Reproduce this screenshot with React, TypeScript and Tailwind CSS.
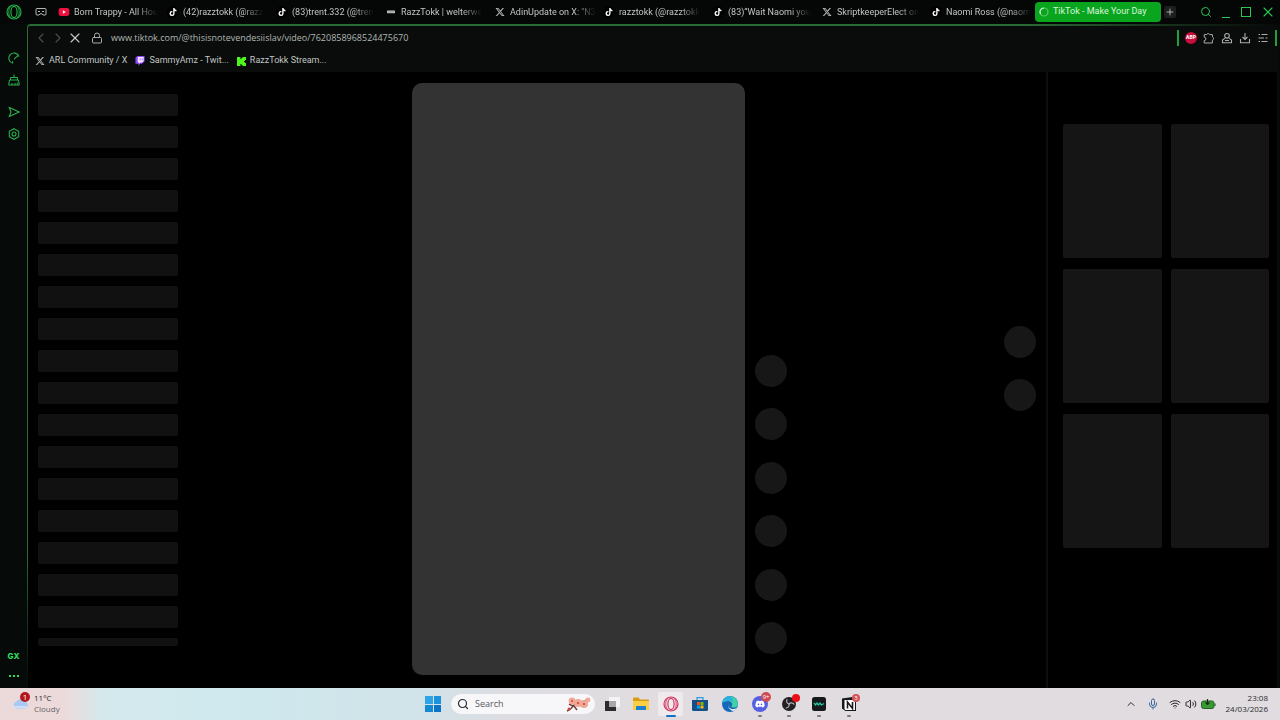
import React from "react";
import clsx from "clsx";
import { FaXTwitter, FaTiktok } from "react-icons/fa6";
import { FaDiscord } from "react-icons/fa";
import {
  ChevronLeft,
  ChevronRight,
  ChevronUp,
  Lock,
  Mic,
  Plus,
  Search,
  Volume2,
  Wifi,
  X,
} from "lucide-react";

type Favicon = "youtube" | "tiktok" | "x" | "dash";

const tabs: { icon: Favicon; title: string }[] = [
  { icon: "youtube", title: "Born Trappy - All Hou" },
  { icon: "tiktok", title: "(42)razztokk (@razz" },
  { icon: "tiktok", title: "(83)trent.332 (@tren" },
  { icon: "dash", title: "RazzTokk | welterwe" },
  { icon: "x", title: 'AdinUpdate on X: "N3' },
  { icon: "tiktok", title: "razztokk (@razztokk" },
  { icon: "tiktok", title: "(83)“Wait Naomi you" },
  { icon: "x", title: "SkriptkeeperElect on" },
  { icon: "tiktok", title: "Naomi Ross (@naom" },
];

const menuRows = Array.from({ length: 18 }, (_, i) => i);
const actions = Array.from({ length: 6 }, (_, i) => i);
const related = Array.from({ length: 6 }, (_, i) => i);

function TabIcon({ icon }: { icon: Favicon }) {
  if (icon === "youtube") {
    return (
      <svg viewBox="0 0 12 9" className="h-2 w-3 shrink-0">
        <rect width="12" height="9" rx="2.4" fill="#f0103f" />
        <path d="M4.7 2.5v4l3.4-2z" fill="#fff" />
      </svg>
    );
  }
  if (icon === "x") return <FaXTwitter className="mx-px size-2.5 shrink-0 text-[#b9bdbb]" />;
  if (icon === "dash") {
    return (
      <svg viewBox="0 0 10 10" className="mx-px size-2.5 shrink-0">
        <rect x="1" y="3.6" width="8" height="2.6" rx="0.6" fill="#c4c8c6" />
        <path d="M2 5h6" stroke="#6d716f" strokeWidth="0.6" />
      </svg>
    );
  }
  return (
    <span className="flex size-3 shrink-0 items-center justify-center rounded-full bg-black">
      <FaTiktok className="size-2 text-white" />
    </span>
  );
}

function OperaRing({ className }: { className?: string }) {
  return (
    <svg viewBox="0 0 16 16" fill="none" stroke="currentColor" strokeWidth="1.2" className={className}>
      <circle cx="8" cy="8" r="7" />
      <ellipse cx="8" cy="8" rx="3.1" ry="5.6" />
      <path d="M5.6 1.6C1.8 4 1.8 12 5.6 14.4M10.4 1.6c3.8 2.4 3.8 10.4 0 12.8" strokeWidth="0.9" />
    </svg>
  );
}

function TabStrip() {
  return (
    <header className="flex h-6 shrink-0 items-center bg-[#040705]">
      <button aria-label="Opera menu" className="flex w-7 shrink-0 justify-center text-[#23b04a]">
        <OperaRing className="size-4" />
      </button>
      <button aria-label="Workspaces" className="flex w-[26px] shrink-0 justify-center text-[#b4b8b6]">
        <svg viewBox="0 0 12 10" fill="none" stroke="currentColor" strokeWidth="1" className="h-2.5 w-3">
          <path d="M1 7V2.5a1 1 0 0 1 1-1h8a1 1 0 0 1 1 1V7a1 1 0 0 1-1 1H8L7 6.8H5L4 8H2a1 1 0 0 1-1-1z" />
          <path d="M3 4.5h2M7 4.5h2" />
        </svg>
      </button>
      <nav className="flex min-w-0 flex-1">
        {tabs.map((tab) => (
          <a key={tab.title} href="#" className="flex min-w-0 flex-1 items-center gap-1 pl-1">
            <TabIcon icon={tab.icon} />
            <span className="mask-r-from-75% text-[9px] leading-3 whitespace-nowrap text-[#c2c6c4]">{tab.title}</span>
          </a>
        ))}
      </nav>
      <a
        href="#"
        className="flex h-5 w-[126px] shrink-0 items-center gap-1 rounded-sm bg-[#0aa51f] pl-1 text-[9px] text-[#d9f5dc]"
      >
        <svg viewBox="0 0 10 10" fill="none" className="size-2.5">
          <circle cx="5" cy="5" r="4" stroke="#5cc968" strokeWidth="1.2" />
          <path d="M1.6 7A4 4 0 0 1 5 1" stroke="#c8f0cc" strokeWidth="1.2" />
        </svg>
        TikTok - Make Your Day
      </a>
      <button
        aria-label="New tab"
        className="mr-6 ml-[3px] flex size-3 shrink-0 items-center justify-center rounded-xs bg-[#1c1f1d] text-[#c5c9c7]"
      >
        <Plus className="size-2.5" />
      </button>
      <div className="flex shrink-0 items-center gap-2 pr-1 text-[#2cc653]">
        <button aria-label="Search tabs">
          <Search className="size-3" />
        </button>
        <button aria-label="Minimize" className="flex size-3 items-end justify-center">
          <span className="h-px w-2 bg-current" />
        </button>
        <button aria-label="Maximize" className="flex size-3 items-center justify-center">
          <span className="size-2.5 border border-current" />
        </button>
        <button aria-label="Close">
          <X className="size-4" strokeWidth={1.6} />
        </button>
      </div>
    </header>
  );
}

function SideBar() {
  return (
    <aside className="flex w-[27px] shrink-0 flex-col items-center bg-[#060a08] pt-7 pb-2 text-[#2cb04e]">
      <button aria-label="GX Control" className="mb-2.5">
        <svg viewBox="0 0 12 12" fill="none" stroke="currentColor" strokeWidth="1.1" className="size-3">
          <path d="M4.6 11.2A5.2 5.2 0 1 1 11 4.6M6 7.2l4.4-4M4.6 11.2V9.2" />
        </svg>
      </button>
      <button aria-label="GX Cleaner" className="mb-5">
        <svg viewBox="0 0 12 12" fill="none" stroke="currentColor" strokeWidth="1" className="size-3">
          <path d="M6 .5v3M2.5 6V3.5h7V6M1.5 6h9l.8 5H.7zM4 11V9M7 11V9M9.3 8.6v2" />
        </svg>
      </button>
      <button aria-label="Messengers" className="mb-2.5">
        <svg viewBox="0 0 12 12" fill="none" stroke="currentColor" strokeWidth="1.1" className="size-3">
          <path d="M1.3 1.5 11 6l-9.700 4.500L3 6z" />
        </svg>
      </button>
      <button aria-label="Settings">
        <svg viewBox="0 0 12 12" fill="none" stroke="currentColor" strokeWidth="1.1" className="size-3">
          <path d="M6 .7 10.700 3.300v5.400L6 11.300 1.300 8.700V3.300z" />
          <circle cx="6" cy="6" r="2" />
        </svg>
      </button>
      <button aria-label="GX Corner" className="mt-auto mb-2.5 font-[Inter,sans-serif] text-[8px] leading-3 font-extrabold text-[#32d95f]">
        GX
      </button>
      <button aria-label="Sidebar setup" className="flex h-2 items-center gap-0.5">
        <span className="size-0.5 bg-[#32d95f]" />
        <span className="size-0.5 bg-[#32d95f]" />
        <span className="size-0.5 bg-[#32d95f]" />
      </button>
    </aside>
  );
}

function AddressBar() {
  return (
    <div className="flex h-6 items-center pl-[5px] text-[#a9adab]">
      <div className="mr-2 flex items-center gap-px">
        <button aria-label="Back" className="text-[#4b4f4d]">
          <ChevronLeft className="size-4" strokeWidth={1.6} />
        </button>
        <button aria-label="Forward" className="text-[#4b4f4d]">
          <ChevronRight className="size-4" strokeWidth={1.6} />
        </button>
        <button aria-label="Stop" className="text-[#c5c9c7]">
          <X className="size-4" strokeWidth={1.6} />
        </button>
      </div>
      <Lock className="mr-2 size-3 shrink-0" />
      <input
        aria-label="Address"
        readOnly
        value="www.tiktok.com/@thisisnotevendesiislav/video/7620858968524475670"
        className="min-w-0 flex-1 bg-transparent font-['Open_Sans',sans-serif] text-[9px] text-[#b0b7b3] outline-none"
      />
      <div className="flex items-center gap-1.5">
        <span className="h-4 w-0.5 bg-[#1fa03c]" />
        <button
          aria-label="Adblock Plus"
          className="flex size-3 items-center justify-center rounded-full bg-[#c70d3a] text-[5px] font-extrabold text-white"
        >
          ABP
        </button>
        <button aria-label="Extensions">
          <svg viewBox="0 0 12 12" fill="none" stroke="currentColor" strokeWidth="1" className="size-3">
            <path d="M1.2 2.6h2.5a1.6 1.6 0 0 1 3 0h2.7v2.3a1.7 1.7 0 0 1 0 3.2V11H1.2V8.6a1.7 1.7 0 0 0 0-3.4z" />
          </svg>
        </button>
        <button aria-label="Profile">
          <svg viewBox="0 0 12 12" fill="none" stroke="currentColor" strokeWidth="1.1" className="size-3">
            <circle cx="6" cy="3.8" r="2.3" />
            <path d="M3.8 6.4 1.5 8v2.7h9V8L8.2 6.4M4 8.5h4" />
          </svg>
        </button>
        <button aria-label="Downloads">
          <svg viewBox="0 0 12 12" fill="none" stroke="currentColor" strokeWidth="1.1" className="size-3">
            <path d="M6 1v6.5M3.5 5 6 7.5 8.5 5M1.5 7v3.7h9V7" />
          </svg>
        </button>
        <button aria-label="Easy setup">
          <svg viewBox="0 0 12 12" fill="none" stroke="currentColor" strokeWidth="1.2" className="size-3">
            <path d="M1.5 2.5H3M4.5 2.5h6M1.5 6H7M8.5 6h2M1.5 9.5H3M4.5 9.5h6" />
          </svg>
        </button>
        <span className="h-4 w-0.5 bg-[#1fa03c]" />
      </div>
    </div>
  );
}

function Bookmarks() {
  return (
    <nav className="flex h-[22px] items-center gap-2 pl-[7px] text-[9px] text-[#c2c6c4]">
      <a href="#" className="flex items-center gap-1">
        <FaXTwitter className="size-2.5 text-[#b9bdbb]" />
        ARL Community / X
      </a>
      <a href="#" className="flex items-center gap-1">
        <svg viewBox="0 0 10 11" className="size-2.5">
          <path d="M2 0h8v6L7.2 8.6H5.2L3.2 10.6V8.6H0V2z" fill="#9147ff" />
          <path d="M2.6 1H9v4.6L7.4 7.2H5.4L4 8.6V7.2H2.6z" fill="#f1e9ff" />
          <path d="M5.2 2.6v2.2M7.4 2.6v2.2" stroke="#9147ff" strokeWidth="0.9" />
        </svg>
        SammyAmz - Twit...
      </a>
      <a href="#" className="flex items-center gap-1">
        <svg viewBox="0 0 9 9" className="size-[9px]">
          <path d="M0 0h3.4v2h1V1h1V0H9v3H8v1H7v1h1v1h1v3H5.4V8h-1V7h-1v2H0z" fill="#4df51c" />
        </svg>
        RazzTokk Stream...
      </a>
    </nav>
  );
}

function Page() {
  return (
    <div className="flex min-h-0 flex-1 bg-black">
      <div className="mt-[22px] mb-10 flex w-[166px] shrink-0 flex-col gap-2.5 overflow-hidden pr-4 pl-2.5">
        {menuRows.map((row) => (
          <div key={row} className="h-[22px] shrink-0 rounded-xs bg-[#111111] last:h-2" />
        ))}
      </div>
      <main className="flex min-w-0 flex-1 justify-center gap-2.5 pt-[11px] pb-[13px]">
        <div className="aspect-9/16 h-full rounded-[10px] bg-[#333333]" />
        <div className="mb-[21px] flex h-[299px] flex-col justify-between self-end">
          {actions.map((action) => (
            <div key={action} className="size-8 rounded-full bg-[#171717]" />
          ))}
        </div>
      </main>
      <div className="flex shrink-0 flex-col justify-center gap-[21px] pr-2.5 pb-6">
        <div className="size-8 rounded-full bg-[#171717]" />
        <div className="size-8 rounded-full bg-[#171717]" />
      </div>
      <section className="w-[231px] shrink-0 border-l-2 border-[#0e0e0e] pt-[52px] pr-2 pl-[15px]">
        <div className="grid grid-cols-2 gap-x-[9px] gap-y-[11px]">
          {related.map((item) => (
            <div key={item} className="h-[134px] rounded-xs bg-[#151515]" />
          ))}
        </div>
      </section>
    </div>
  );
}

function TaskItem({
  label,
  active,
  running,
  badge,
  children,
}: {
  label: string;
  active?: boolean;
  running?: boolean;
  badge?: React.ReactNode;
  children: React.ReactNode;
}) {
  return (
    <button
      aria-label={label}
      className={clsx("relative flex h-6 w-[25px] items-center justify-center rounded-xs", active && "bg-[#efeaec]")}
    >
      {children}
      {badge}
      {active && <span className="absolute -bottom-px h-0.5 w-2.5 rounded-full bg-[#1273c4]" />}
      {running && <span className="absolute -bottom-px h-0.5 w-1 rounded-full bg-[#7f7b7d]" />}
    </button>
  );
}

function TaskBar() {
  return (
    <footer className="flex h-8 shrink-0 items-center justify-between bg-[linear-gradient(to_right,#ecdadb_5%,#d5e9ed_8%,#cfe9ee_18%,#d1e3e9_33%,#dddce1_40%,#e0dce0_50%)] font-['Open_Sans',sans-serif] text-[#2b2b2b]">
      <div className="flex flex-1 items-center pl-3">
        <button className="flex items-center gap-1 pb-0.5 text-left">
          <span className="relative">
            <svg viewBox="0 0 18 14" className="h-3.5 w-[18px]">
              <path d="M4.5 12.5a3.6 3.6 0 0 1 0-7A4.8 4.8 0 0 1 13 6a3.4 3.4 0 0 1 1 6.5z" fill="#a9c8f3" />
              <path d="M2 11h13" stroke="#dceafb" strokeWidth="1.4" />
            </svg>
            <span className="absolute -top-1 left-2 flex size-2.5 items-center justify-center rounded-full bg-[#b3161b] text-[8px] leading-none text-white">
              1
            </span>
          </span>
          <span className="text-[8px] leading-[11px]">
            11°C
            <br />
            <span className="text-[#666264]">Cloudy</span>
          </span>
        </button>
      </div>
      <div className="flex items-center pl-1.5">
        <button aria-label="Start" className="mr-2.5 grid size-4 grid-cols-2 gap-px">
          <span className="bg-[#2fa5e6]" />
          <span className="bg-[#1b93dc]" />
          <span className="bg-[#1688d4]" />
          <span className="bg-[#0b74c6]" />
        </button>
        <label className="flex h-5 w-36 items-center rounded-full bg-[#f7f6f8] pr-1 pl-1.5">
          <Search className="mr-1.5 size-3 shrink-0" strokeWidth={2.4} />
          <input
            aria-label="Search"
            placeholder="Search"
            className="min-w-0 flex-1 bg-transparent text-[9px] outline-none placeholder:text-[#5c595b]"
          />
          <svg viewBox="0 0 26 16" className="h-4 w-[26px]">
            <path d="M2 15c4-1 5-4 7-6s6-1 12-5M8 10l-4-2M9 10l3 4" fill="none" stroke="#6b3a35" strokeWidth="1.4" />
            <g fill="#f0a795">
              <circle cx="7" cy="5" r="3.4" />
              <circle cx="13" cy="7" r="4" />
              <circle cx="19" cy="8" r="4" />
              <circle cx="23" cy="4" r="2.4" />
            </g>
            <g fill="#c9483f">
              <circle cx="7" cy="5" r="1" />
              <circle cx="13" cy="7" r="1.1" />
              <circle cx="19" cy="8" r="1.1" />
              <circle cx="4" cy="13" r="1.5" />
            </g>
          </svg>
        </label>
        <div className="ml-1 flex w-[262px] items-center justify-between">
          <TaskItem label="Task view">
            <svg viewBox="0 0 16 16" className="size-4">
              <rect x="5" y="1" width="11" height="10" fill="#f5f4f5" />
              <rect x="1" y="5" width="11" height="10" fill="#2c2b2d" />
              <rect x="5" y="5" width="7" height="6" fill="#a9a7aa" />
            </svg>
          </TaskItem>
          <TaskItem label="File Explorer">
            <svg viewBox="0 0 16 14" className="h-3.5 w-4">
              <path d="M0 1.5A1 1 0 0 1 1 .5h4.5L7 2.5h8a1 1 0 0 1 1 1V12a1 1 0 0 1-1 1H1a1 1 0 0 1-1-1z" fill="#d99b14" />
              <path d="M0 4h16v8a1 1 0 0 1-1 1H1a1 1 0 0 1-1-1z" fill="#fbcf45" />
              <path d="M3 13V10a1 1 0 0 1 1-1h8a1 1 0 0 1 1 1v3z" fill="#1c7fd0" />
            </svg>
          </TaskItem>
          <TaskItem label="Opera GX" active>
            <OperaRing className="size-4 text-[#d23560]" />
          </TaskItem>
          <TaskItem label="Microsoft Store">
            <svg viewBox="0 0 16 16" className="size-4">
              <path d="M5 4V1.6h6V4" fill="none" stroke="#2f9be0" strokeWidth="1.2" />
              <path d="M0 4h16v9.5a1.5 1.5 0 0 1-1.5 1.5h-13A1.5 1.5 0 0 1 0 13.5z" fill="#164f86" />
              <path d="M5 6h3v3H5z" fill="#f25022" />
              <path d="M8.5 6h3v3h-3z" fill="#7fba00" />
              <path d="M5 9.5h3v3H5z" fill="#00a4ef" />
              <path d="M8.5 9.5h3v3h-3z" fill="#ffb900" />
            </svg>
          </TaskItem>
          <TaskItem label="Microsoft Edge">
            <svg viewBox="0 0 16 16" className="size-4">
              <circle cx="8" cy="8" r="8" fill="#1668b8" />
              <path d="M.2 6.5A8 8 0 0 1 16 8c0 2.5-2 3.6-4 3.6-1.6 0-2.6-.6-2.6-1.2 0-.5.8-.9.8-2.200C10.2 6.3 8.2 5 6 5 3.2 5 1 6 .2 7z" fill="#3fd0a8" />
              <path d="M.2 7C1.2 2.5 5 0 8 0c2 1 3 3 3 6-1-1-3-1.500-5-1C3.200 5 1 6 .2 7z" fill="#2ab1e0" />
              <path d="M7 7.500c-1.500 3 .5 5.500 4 5.500 1.500 0 3-.4 4-1.500-.5 1.500-2 3-3.500 3.500C8 14.500 5 11 7 7.500z" fill="#e3eef5" />
            </svg>
          </TaskItem>
          <TaskItem
            label="Discord"
            running
            badge={
              <span className="absolute top-0 right-px flex size-2.5 items-center justify-center rounded-full bg-[#cf4a52] text-[6px] text-white">
                9+
              </span>
            }
          >
            <span className="flex size-4 items-center justify-center rounded-full bg-[#5560e0]">
              <FaDiscord className="size-2.5 text-white" />
            </span>
          </TaskItem>
          <TaskItem
            label="OBS Studio"
            running
            badge={<span className="absolute top-0.5 right-0.5 size-2 rounded-full bg-[#ea0f16]" />}
          >
            <svg viewBox="0 0 14 14" className="size-3.5">
              <circle cx="7" cy="7" r="7" fill="#232124" />
              <g fill="none" stroke="#b8b5b7" strokeWidth="1.1" strokeLinecap="round">
                <path d="M7 7C5 6.5 4 4.5 5 2.5" />
                <path d="M7 7c1.4-1.5 3.6-1.5 4.9.2" />
                <path d="M7 7c.6 2-.7 3.9-2.9 4" />
              </g>
            </svg>
          </TaskItem>
          <TaskItem label="Wave Link" running>
            <svg viewBox="0 0 14 14" className="size-3.5">
              <rect width="14" height="14" rx="2.5" fill="#15191b" />
              <path d="M2 6l1.500 2L5 6l1.500 2L8 6l1.500 2L12 6.500" fill="none" stroke="#27c2a0" strokeWidth="1.3" />
            </svg>
          </TaskItem>
          <TaskItem
            label="Notion"
            running
            badge={
              <span className="absolute top-0.5 right-px flex size-2 items-center justify-center rounded-full bg-[#d4525a] text-[6px] text-white">
                3
              </span>
            }
          >
            <svg viewBox="0 0 16 16" className="size-4">
              <path d="M1 2.5 11.5 1 15 3.5V15H4.5L1 12.5z" fill="#19181a" />
              <path d="M3.5 4h10.5V14H4.5l-1-1z" fill="#fff" />
              <path d="M6.500 12.500V6l5 6.500V6" fill="none" stroke="#19181a" strokeWidth="1.6" />
            </svg>
          </TaskItem>
        </div>
      </div>
      <div className="flex flex-1 items-center justify-end pr-3">
        <button aria-label="Show hidden icons" className="mr-2.5">
          <ChevronUp className="size-3" />
        </button>
        <Mic className="mr-2.5 size-3 text-[#35699f]" />
        <button aria-label="Network and sound" className="mr-2.5 flex items-center gap-1">
          <Wifi className="size-3" />
          <Volume2 className="size-3" />
          <svg viewBox="0 0 15 10" className="h-2.5 w-[15px]">
            <rect x="0.5" y="2" width="12.5" height="7.5" rx="2" fill="#379a35" stroke="#2b5f2b" />
            <path d="M14 4.5v2.500" stroke="#2b5f2b" strokeWidth="1.2" />
            <path d="M6.500 0v5M4.500 3.500l2 2 2-2" fill="none" stroke="#14300f" strokeWidth="1.2" />
          </svg>
        </button>
        <div className="pb-0.5 text-right text-[8px] leading-[11px]">
          23:08
          <br />
          24/03/2026
        </div>
      </div>
    </footer>
  );
}

export default function App() {
  return (
    <div className="flex h-screen flex-col overflow-hidden bg-[#060a08] font-[Roboto,sans-serif]">
      <TabStrip />
      <div className="flex min-h-0 flex-1">
        <SideBar />
        <div className="flex min-w-0 flex-1 rounded-tl-sm bg-linear-to-br from-[#2a6a35] from-40% to-[#060a08] to-50% pt-0.5 pr-[3px] pl-px">
          <div className="flex min-w-0 flex-1 flex-col rounded-tl-xs bg-[#090c0b]">
            <AddressBar />
            <Bookmarks />
            <Page />
          </div>
        </div>
      </div>
      <TaskBar />
    </div>
  );
}
